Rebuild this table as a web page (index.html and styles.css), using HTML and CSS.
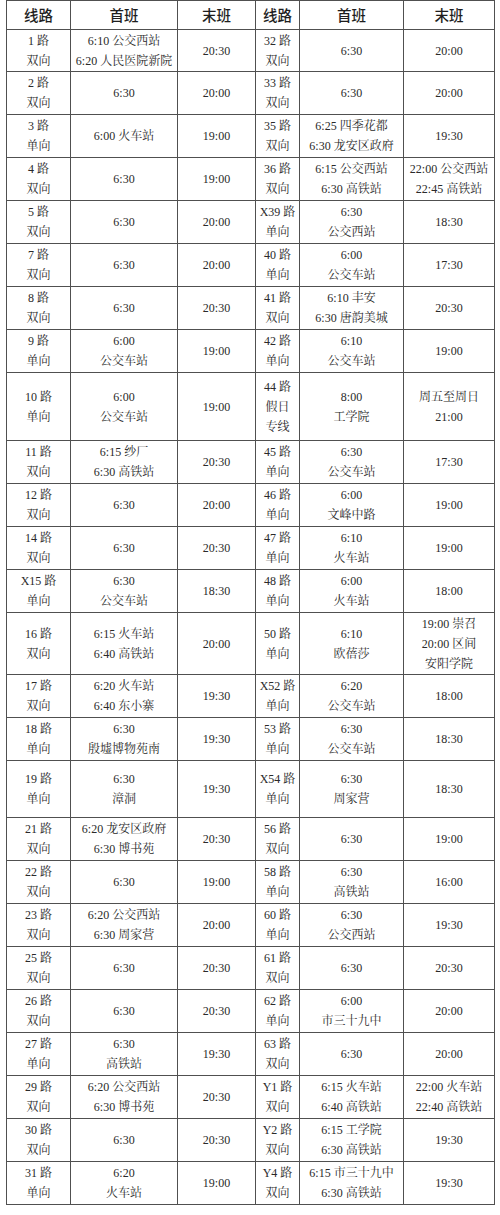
FILE: index.html
```html
<!DOCTYPE html>
<html lang="zh-CN">
<head>
<meta charset="utf-8">
<title>公交线路首末班时间表</title>
<link rel="stylesheet" href="styles.css">
</head>
<body>
<table class="schedule">
  <colgroup>
    <col class="c-line">
    <col class="c-first">
    <col class="c-last">
    <col class="c-line2">
    <col class="c-first2">
    <col class="c-last2">
  </colgroup>
  <thead>
    <tr class="head">
      <th>线路</th><th>首班</th><th>末班</th><th>线路</th><th>首班</th><th>末班</th>
    </tr>
  </thead>
  <tbody>
    <tr class="r42"><td>1 路<br>双向</td><td>6:10 公交西站<br>6:20 人民医院新院</td><td>20:30</td><td>32 路<br>双向</td><td>6:30</td><td>20:00</td></tr>
    <tr><td>2 路<br>双向</td><td>6:30</td><td>20:00</td><td>33 路<br>双向</td><td>6:30</td><td>20:00</td></tr>
    <tr><td>3 路<br>单向</td><td>6:00 火车站</td><td>19:00</td><td>35 路<br>双向</td><td>6:25 四季花都<br>6:30 龙安区政府</td><td>19:30</td></tr>
    <tr><td>4 路<br>双向</td><td>6:30</td><td>19:00</td><td>36 路<br>双向</td><td>6:15 公交西站<br>6:30 高铁站</td><td>22:00 公交西站<br>22:45 高铁站</td></tr>
    <tr><td>5 路<br>双向</td><td>6:30</td><td>20:00</td><td>X39 路<br>单向</td><td>6:30<br>公交西站</td><td>18:30</td></tr>
    <tr><td>7 路<br>双向</td><td>6:30</td><td>20:00</td><td>40 路<br>单向</td><td>6:00<br>公交车站</td><td>17:30</td></tr>
    <tr><td>8 路<br>双向</td><td>6:30</td><td>20:30</td><td>41 路<br>双向</td><td>6:10 丰安<br>6:30 唐韵美城</td><td>20:30</td></tr>
    <tr><td>9 路<br>单向</td><td>6:00<br>公交车站</td><td>19:00</td><td>42 路<br>单向</td><td>6:10<br>公交车站</td><td>19:00</td></tr>
    <tr class="r68"><td>10 路<br>单向</td><td>6:00<br>公交车站</td><td>19:00</td><td>44 路<br>假日<br>专线</td><td>8:00<br>工学院</td><td>周五至周日<br>21:00</td></tr>
    <tr><td>11 路<br>双向</td><td>6:15 纱厂<br>6:30 高铁站</td><td>20:30</td><td>45 路<br>单向</td><td>6:30<br>公交车站</td><td>17:30</td></tr>
    <tr><td>12 路<br>双向</td><td>6:30</td><td>20:00</td><td>46 路<br>单向</td><td>6:00<br>文峰中路</td><td>19:00</td></tr>
    <tr><td>14 路<br>双向</td><td>6:30</td><td>20:30</td><td>47 路<br>单向</td><td>6:10<br>火车站</td><td>19:00</td></tr>
    <tr><td>X15 路<br>单向</td><td>6:30<br>公交车站</td><td>18:30</td><td>48 路<br>单向</td><td>6:00<br>火车站</td><td>18:00</td></tr>
    <tr class="r62"><td>16 路<br>双向</td><td>6:15 火车站<br>6:40 高铁站</td><td>20:00</td><td>50 路<br>单向</td><td>6:10<br>欧蓓莎</td><td>19:00 崇召<br>20:00 区间<br>安阳学院</td></tr>
    <tr><td>17 路<br>双向</td><td>6:20 火车站<br>6:40 东小寨</td><td>19:30</td><td>X52 路<br>单向</td><td>6:20<br>公交车站</td><td>18:00</td></tr>
    <tr><td>18 路<br>单向</td><td>6:30<br>殷墟博物苑南</td><td>19:30</td><td>53 路<br>单向</td><td>6:30<br>公交车站</td><td>18:30</td></tr>
    <tr class="r57"><td>19 路<br>单向</td><td>6:30<br>漳洞</td><td>19:30</td><td>X54 路<br>单向</td><td>6:30<br>周家营</td><td>18:30</td></tr>
    <tr><td>21 路<br>双向</td><td>6:20 龙安区政府<br>6:30 博书苑</td><td>20:30</td><td>56 路<br>双向</td><td>6:30</td><td>19:00</td></tr>
    <tr><td>22 路<br>双向</td><td>6:30</td><td>19:00</td><td>58 路<br>单向</td><td>6:30<br>高铁站</td><td>16:00</td></tr>
    <tr><td>23 路<br>双向</td><td>6:20 公交西站<br>6:30 周家营</td><td>20:00</td><td>60 路<br>单向</td><td>6:30<br>公交西站</td><td>19:30</td></tr>
    <tr><td>25 路<br>双向</td><td>6:30</td><td>20:30</td><td>61 路<br>双向</td><td>6:30</td><td>20:30</td></tr>
    <tr><td>26 路<br>双向</td><td>6:30</td><td>20:30</td><td>62 路<br>单向</td><td>6:00<br>市三十九中</td><td>20:00</td></tr>
    <tr><td>27 路<br>单向</td><td>6:30<br>高铁站</td><td>19:30</td><td>63 路<br>双向</td><td>6:30</td><td>20:00</td></tr>
    <tr><td>29 路<br>双向</td><td>6:20 公交西站<br>6:30 博书苑</td><td>20:30</td><td>Y1 路<br>双向</td><td>6:15 火车站<br>6:40 高铁站</td><td>22:00 火车站<br>22:40 高铁站</td></tr>
    <tr><td>30 路<br>双向</td><td>6:30</td><td>20:30</td><td>Y2 路<br>双向</td><td>6:15 工学院<br>6:30 高铁站</td><td>19:30</td></tr>
    <tr><td>31 路<br>单向</td><td>6:20<br>火车站</td><td>19:00</td><td>Y4 路<br>双向</td><td>6:15 市三十九中<br>6:30 高铁站</td><td>19:30</td></tr>
  </tbody>
</table>
</body>
</html>
```

FILE: styles.css
```css
html, body {
  margin: 0;
  padding: 0;
  background: #ffffff;
}

body {
  width: 500px;
  height: 1215px;
  overflow: hidden;
}

.schedule {
  margin: 0 0 0 6px;
  width: 488px;
  border-collapse: collapse;
  table-layout: fixed;
  font-family: "Liberation Serif", "Noto Serif CJK SC", "Noto Sans CJK SC", serif;
  font-size: 12px;
  line-height: 20px;
  color: #2a2a2a;
}

.c-line { width: 64px; }
.c-first { width: 107px; }
.c-last { width: 78px; }
.c-line2 { width: 44px; }
.c-first2 { width: 104px; }
.c-last2 { width: 91px; }

.schedule th,
.schedule td {
  border: 1px solid #505050;
  padding: 0;
  text-align: center;
  vertical-align: middle;
  white-space: nowrap;
}

.schedule th {
  font-family: "Noto Sans CJK SC", sans-serif;
  font-size: 14.5px;
  font-weight: 500;
  color: #1e1e1e;
  line-height: 20px;
}

.head { height: 29px; }
.schedule tbody tr { height: 43px; }
.schedule tbody tr.r42 { height: 42px; }
.schedule tbody tr.r68 { height: 68px; }
.schedule tbody tr.r62 { height: 62px; }
.schedule tbody tr.r57 { height: 57px; }
```
